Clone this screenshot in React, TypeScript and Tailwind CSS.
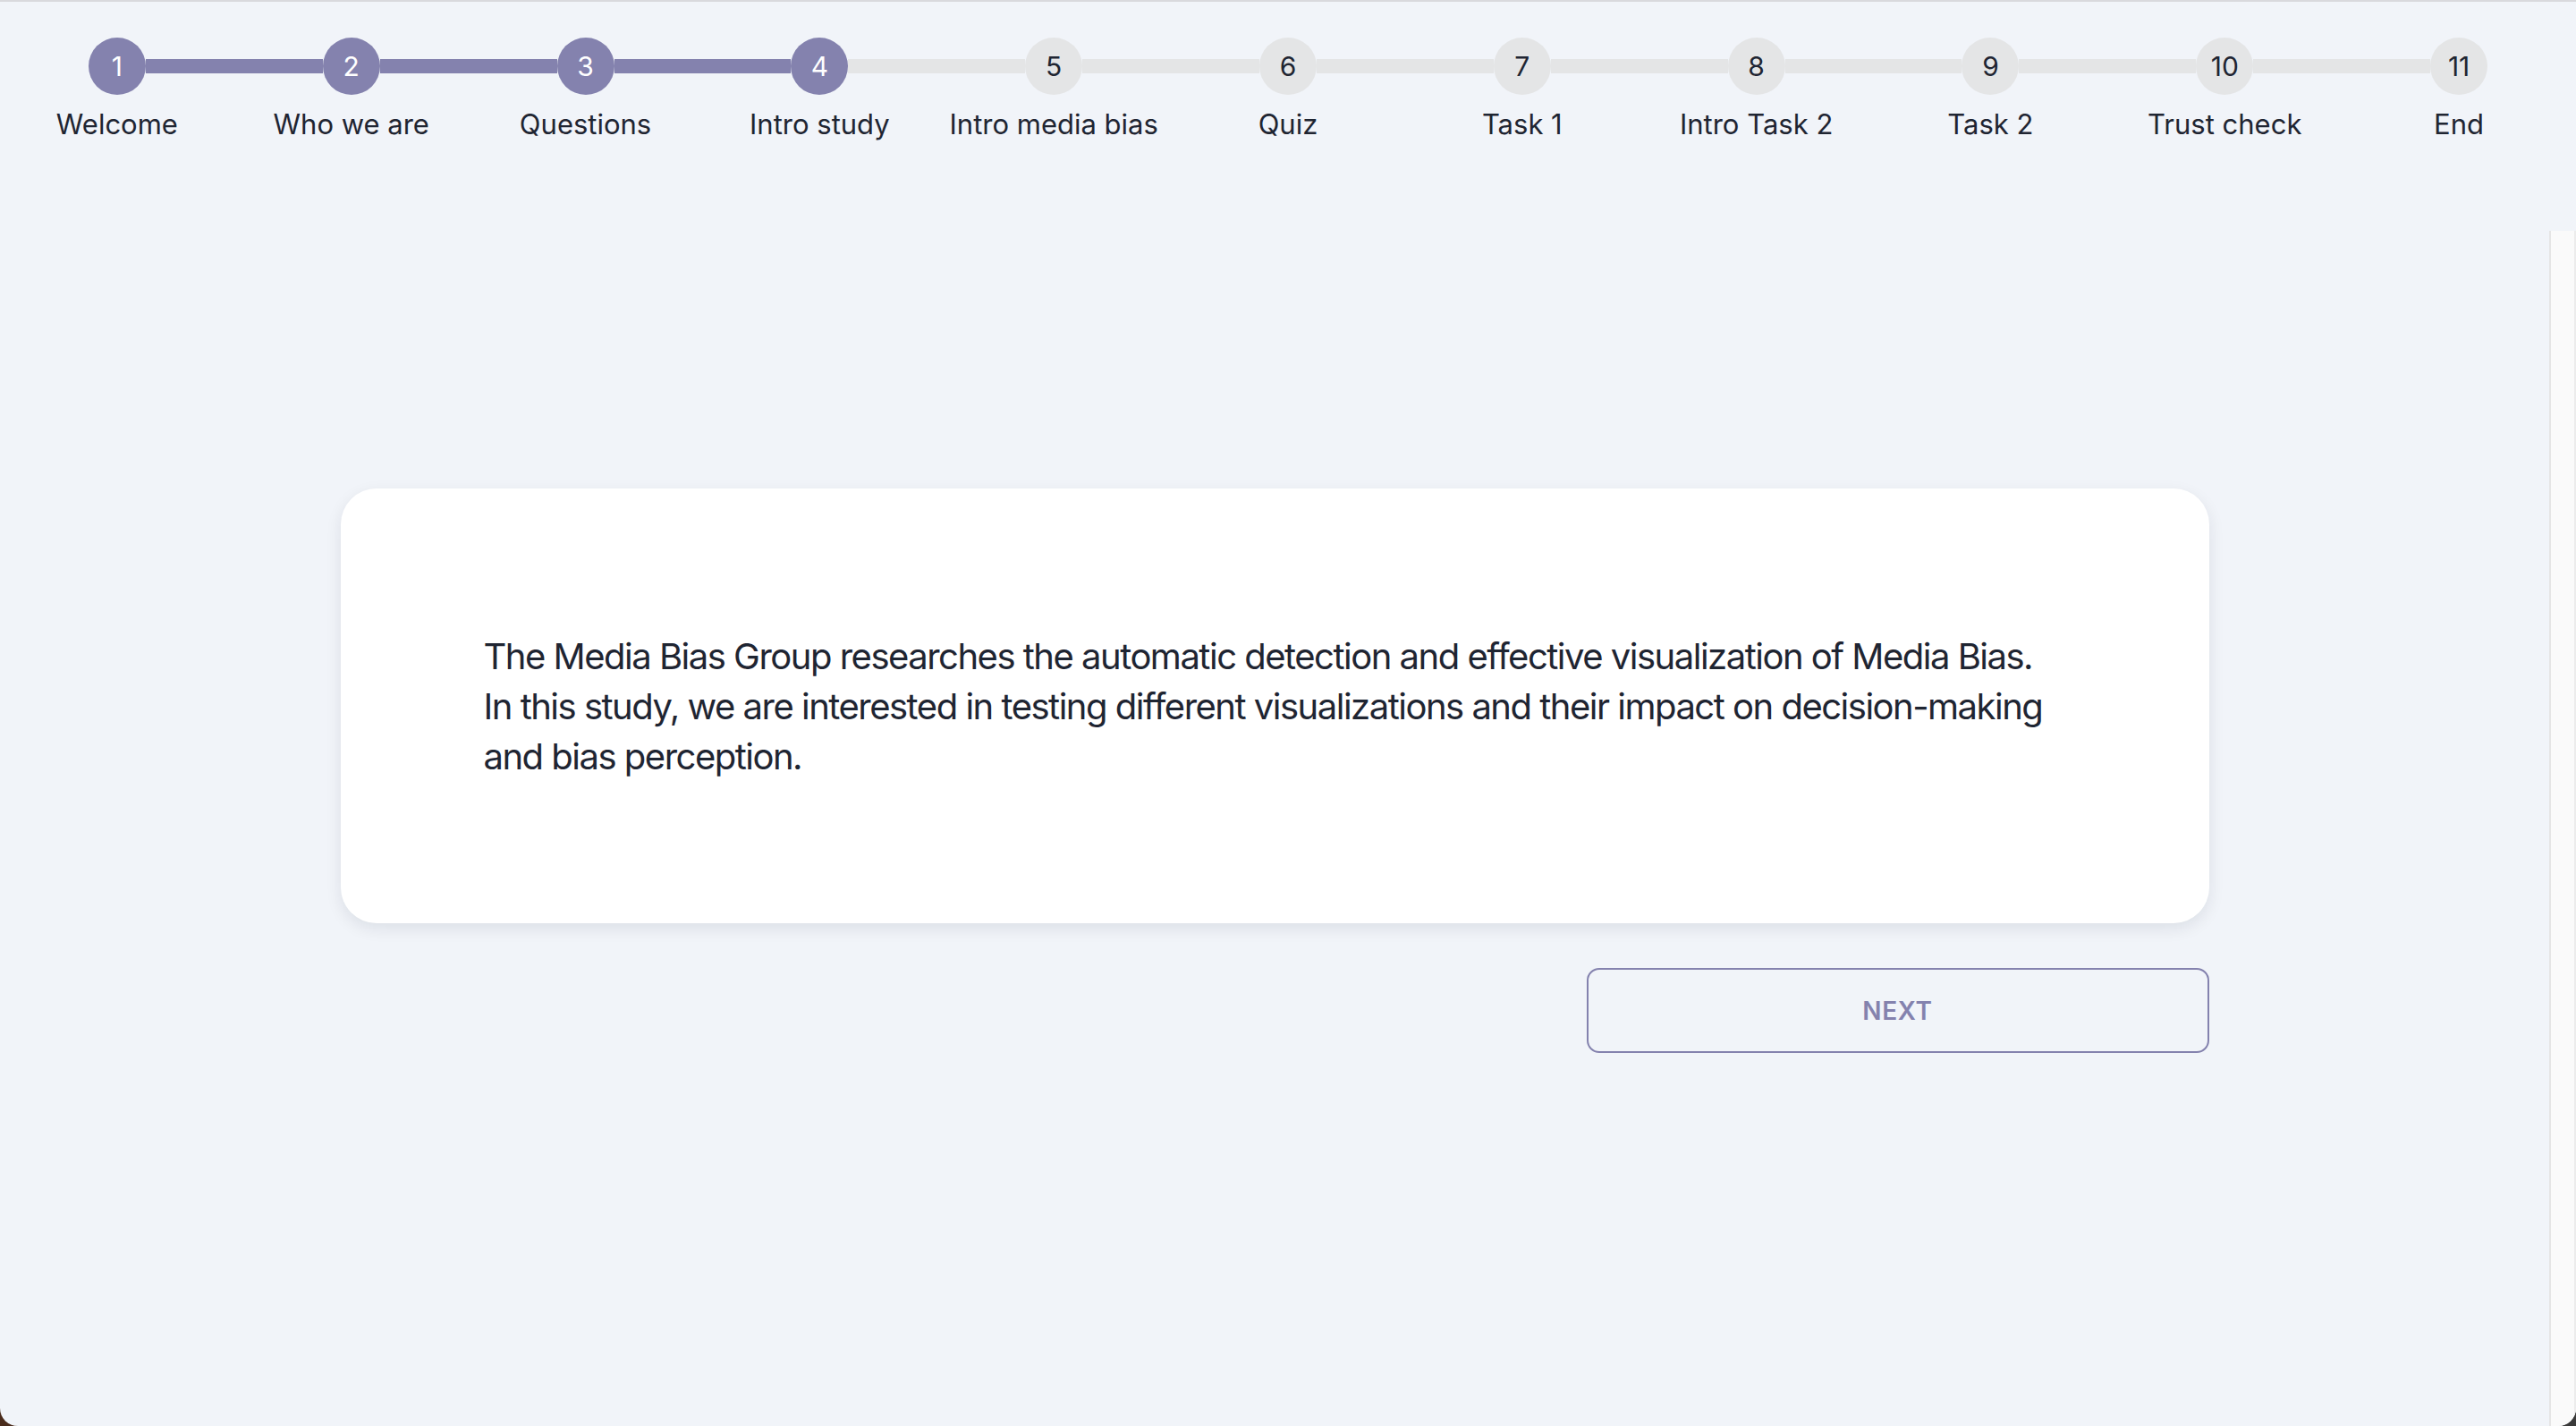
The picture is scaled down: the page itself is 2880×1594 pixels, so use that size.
const steps = [
  "Welcome",
  "Who we are",
  "Questions",
  "Intro study",
  "Intro media bias",
  "Quiz",
  "Task 1",
  "Intro Task 2",
  "Task 2",
  "Trust check",
  "End",
];
const active = 4;

function Step({ index, label }: { index: number; label: string }) {
  const n = index + 1;
  const done = n <= active;
  const leftDone = n <= active;
  const rightDone = n + 1 <= active;
  const first = index === 0;
  const last = index === steps.length - 1;
  return (
    <div className="flex flex-col items-center">
      <div className="flex h-[64px] w-full items-center">
        <div
          className={
            "h-[16px] flex-1 " +
            (first ? "bg-transparent" : leftDone ? "bg-[#8482ae]" : "bg-[#e4e5e6]")
          }
        />
        <div
          className={
            "flex h-[64px] w-[64px] items-center justify-center rounded-full text-[30px] leading-none " +
            (done ? "bg-[#8482ae] text-white" : "bg-[#e4e5e6] text-[#1f2532]")
          }
        >
          {n}
        </div>
        <div
          className={
            "h-[16px] flex-1 " +
            (last ? "bg-transparent" : rightDone ? "bg-[#8482ae]" : "bg-[#e4e5e6]")
          }
        />
      </div>
      <div className="mt-[11px] whitespace-nowrap text-[31px] leading-[44px] text-[#1f2532]">
        {label}
      </div>
    </div>
  );
}

export default function App() {
  return (
    <div className="h-[1594px] w-[2880px] overflow-hidden bg-[linear-gradient(90deg,#4a2c1c,#3a3a3a)] font-[Inter,'Liberation_Sans',sans-serif]">
      <div className="flex h-full flex-col overflow-hidden rounded-b-[20px] border-t-2 border-[#d9d9dd] bg-[#f1f4f9]">
        <div className="grid grid-cols-11 pt-[40px]">
          {steps.map((s, i) => (
            <Step key={s} index={i} label={s} />
          ))}
        </div>
        <div className="mt-[97px] flex flex-1">
          <main className="flex-1 pt-[288px]">
            <div className="mx-auto flex w-[2089px] flex-col">
              <div className="rounded-[40px] bg-white px-[160px] pt-[160px] pb-[158px] shadow-[0_6px_18px_rgba(15,23,42,0.09)]">
                <p className="text-[40px] leading-[56px] tracking-[-1.5px] text-[#1f2532]">
                  <span className="block whitespace-nowrap">
                    The Media Bias Group researches the automatic detection and effective
                    visualization of Media Bias.
                  </span>
                  <span className="block whitespace-nowrap">
                    In this study, we are interested in testing different visualizations and
                    their impact on decision-making
                  </span>
                  <span className="block whitespace-nowrap">and bias perception.</span>
                </p>
              </div>
              <button className="mt-[50px] flex h-[95px] w-[696px] items-center justify-center self-end rounded-[14px] border-2 border-[#8482ae] text-[28px] font-semibold tracking-wide text-[#8482ae]">
                NEXT
              </button>
            </div>
          </main>
          <div className="w-[30px] border-x-2 border-l-[#e5e5e5] border-r-[#ececec] bg-[#fafafa]" />
        </div>
      </div>
    </div>
  );
}
